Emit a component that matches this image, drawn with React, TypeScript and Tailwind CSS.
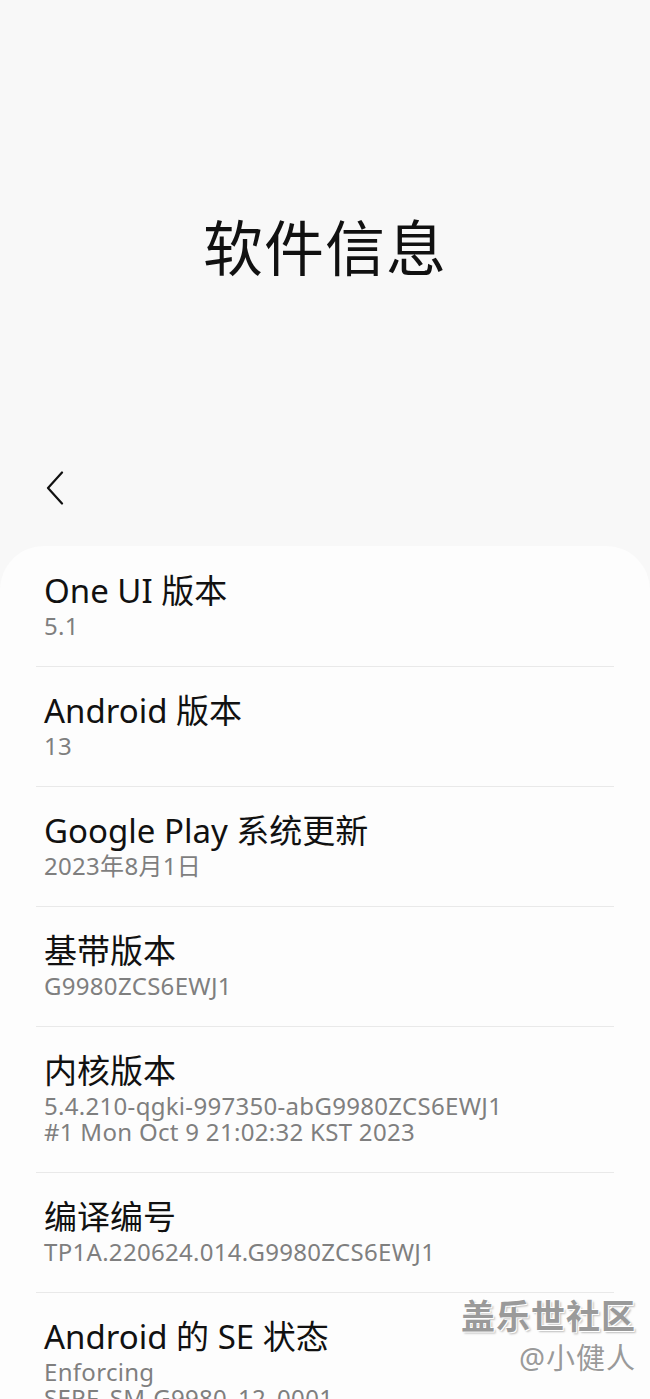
import React from 'react';

type Info = { title: string; lines: string[] };

const items: Info[] = [
  { title: 'One UI 版本', lines: ['5.1'] },
  { title: 'Android 版本', lines: ['13'] },
  { title: 'Google Play 系统更新', lines: ['2023年8月1日'] },
  { title: '基带版本', lines: ['G9980ZCS6EWJ1'] },
  { title: '内核版本', lines: ['5.4.210-qgki-997350-abG9980ZCS6EWJ1', '#1 Mon Oct 9 21:02:32 KST 2023'] },
  { title: '编译编号', lines: ['TP1A.220624.014.G9980ZCS6EWJ1'] },
  { title: 'Android 的 SE 状态', lines: ['Enforcing', 'SEPF_SM-G9980_12_0001'] },
];

const font = { fontFamily: '"Noto Sans", "Noto Sans CJK SC", sans-serif' };

const App: React.FC = () => {
  return (
    <div className="relative w-[650px] h-[1399px] overflow-hidden bg-[#f8f8f8] flex flex-col" style={font}>
      {/* big title */}
      <div className="h-[460px] shrink-0 flex items-center justify-center pt-[36px]">
        <h1 className="text-[60px] leading-none text-[#111] font-normal tracking-[1px]">软件信息</h1>
      </div>

      {/* back */}
      <div className="h-[86px] shrink-0 pl-[46px] pt-[11px]">
        <svg width="18" height="34" viewBox="0 0 18 34" className="block">
          <path d="M16 1.5 L2 17 L16 32.5" fill="none" stroke="#111" strokeWidth="2.2" strokeLinecap="round" strokeLinejoin="round" />
        </svg>
      </div>

      <div className="flex-1 bg-[#fdfdfd] rounded-t-[44px] px-[36px]">
        {items.map((item, i) => (
          <div key={item.title} className={i < items.length - 1 ? 'border-b border-[#e9e9e9]' : ''}>
            <div className={`pl-[8px] pb-[27px] ${i === 0 ? 'pt-[26px]' : 'pt-[25px]'}`}>
              <div className="text-[33px] leading-[38px] text-[#111]">{item.title}</div>
              <div className="mt-[3px]">
                {item.lines.map((l) => (
                  <div key={l} className="text-[24px] leading-[26px] tracking-[0.3px] text-[#7f7f7f]">{l}</div>
                ))}
              </div>
            </div>
          </div>
        ))}
      </div>

      <div className="absolute right-[14px] bottom-[24px] flex flex-col items-end">
        <div
          className="text-[34px] leading-[40px] font-bold text-[#9a9a9a] tracking-[1px]"
          style={{ textShadow: '1px 1px 0 #fff, -1px -1px 0 #fff, 2px 2px 2px rgba(0,0,0,0.25)' }}
        >
          盖乐世社区
        </div>
        <div
          className="text-[29px] leading-[34px] text-[#9a9a9a] mt-[5px] tracking-[1px]"
          style={{ textShadow: '1px 1px 0 #fff, -1px -1px 0 #fff' }}
        >
          @小健人
        </div>
      </div>
    </div>
  );
};

export default App;
